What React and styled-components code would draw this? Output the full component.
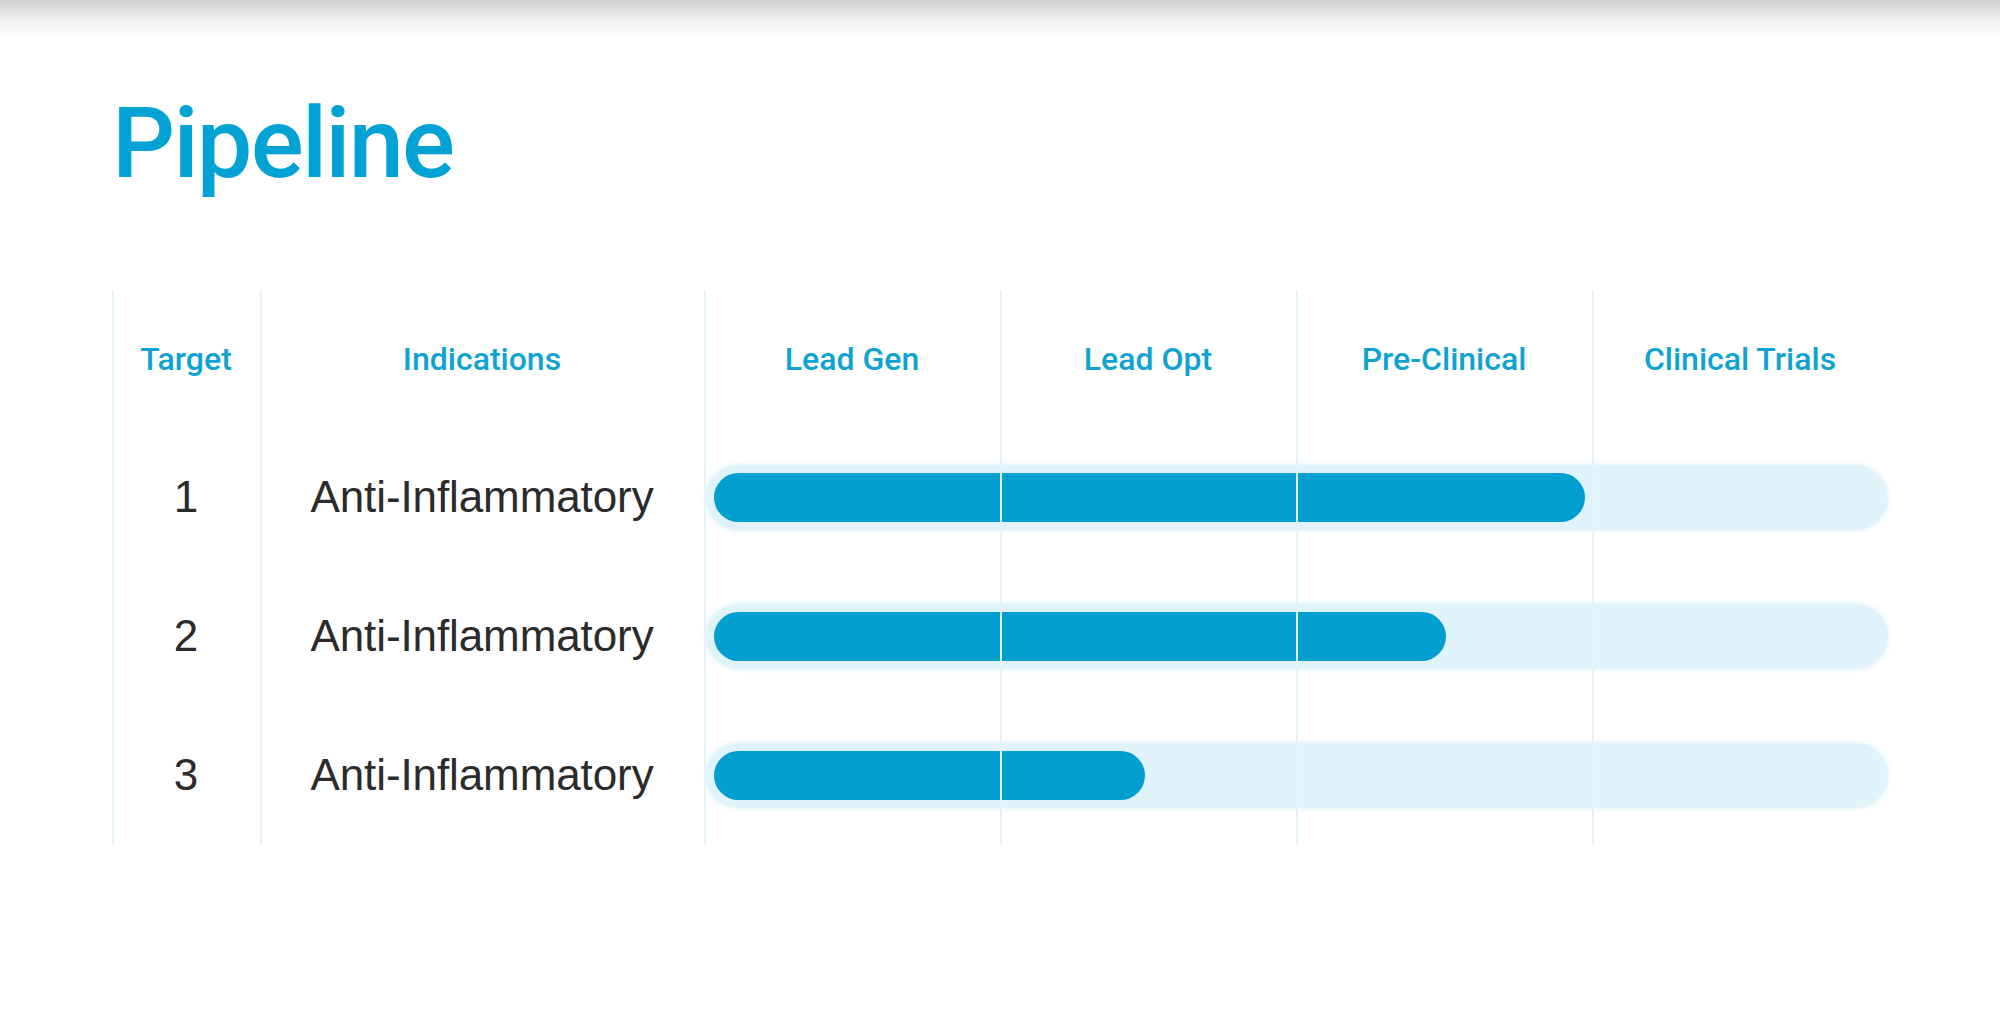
import React from "react";
import styled, { createGlobalStyle } from "styled-components";

const GlobalStyle = createGlobalStyle`
  * { box-sizing: border-box; }
  body {
    margin: 0;
    background: #fff;
    font-family: "Liberation Sans", Arial, sans-serif;
  }
`;

const stages = ["Lead Gen", "Lead Opt", "Pre-Clinical", "Clinical Trials"];

const rows = [
  { target: "1", indication: "Anti-Inflammatory", progress: 74.7 },
  { target: "2", indication: "Anti-Inflammatory", progress: 62.8 },
  { target: "3", indication: "Anti-Inflammatory", progress: 37 },
];

const App = () => {
  return (
    <>
      <GlobalStyle />
      <Shade />
      <Page>
        <Title>Pipeline</Title>
        <Table>
          <HeadCell>Target</HeadCell>
          <HeadCell>Indications</HeadCell>
          {stages.map((s) => (
            <HeadCell key={s}>{s}</HeadCell>
          ))}

          {rows.map((r) => (
            <React.Fragment key={r.target}>
              <BodyCell>{r.target}</BodyCell>
              <BodyCell>{r.indication}</BodyCell>
              <TrackCell>
                <Track>
                  <Fill $pct={r.progress} />
                </Track>
              </TrackCell>
            </React.Fragment>
          ))}

          <Lines>
            {Array.from({ length: 6 }).map((_, i) => (
              <Line key={i} />
            ))}
          </Lines>
        </Table>
      </Page>
    </>
  );
};
export default App;

const columns = "148px 444px repeat(4, 296px)";

const Shade = styled.div`
  height: 38px;
  background: linear-gradient(to bottom, #cfcfcf 0%, #dfdfdf 25%, #f3f3f3 60%, #fff 100%);
`;

const Page = styled.main`
  padding: 46px 0 0 112px;
`;

const Title = styled.h1`
  margin: 0;
  font-family: Roboto, "Liberation Sans", sans-serif;
  font-weight: 500;
  font-size: 99px;
  line-height: 1.2;
  letter-spacing: -1.8px;
  color: #03a2d4;
`;

const Table = styled.div`
  position: relative;
  margin-top: 87px;
  width: 1776px;
  display: grid;
  grid-template-columns: ${columns};
  grid-template-rows: 138px repeat(3, 139px);
`;

const HeadCell = styled.div`
  display: flex;
  align-items: center;
  justify-content: center;
  font-family: Roboto, "Liberation Sans", sans-serif;
  font-weight: 500;
  font-size: 32px;
  color: #0ea3d1;
  letter-spacing: 0;
`;

const BodyCell = styled.div`
  display: flex;
  align-items: center;
  justify-content: center;
  font-size: 44px;
  color: #2b2b2b;
  letter-spacing: -0.1px;
`;

const TrackCell = styled.div`
  grid-column: 3 / span 4;
  display: flex;
  align-items: center;
  padding-left: 2px;
`;

const Track = styled.div`
  width: 100%;
  height: 65px;
  padding: 8px;
  border-radius: 33px;
  background: #e1f3fa;
  box-shadow: 0 0 4px 1px rgba(225, 243, 250, 0.9);
`;

const Fill = styled.div`
  height: 49px;
  width: ${(p) => p.$pct}%;
  border-radius: 25px;
  background: #009fd0;
`;

const Lines = styled.div`
  position: absolute;
  inset: 0;
  display: grid;
  grid-template-columns: ${columns};
  pointer-events: none;
`;

const Line = styled.div`
  border-left: 2px solid #e4f2f9;
`;
